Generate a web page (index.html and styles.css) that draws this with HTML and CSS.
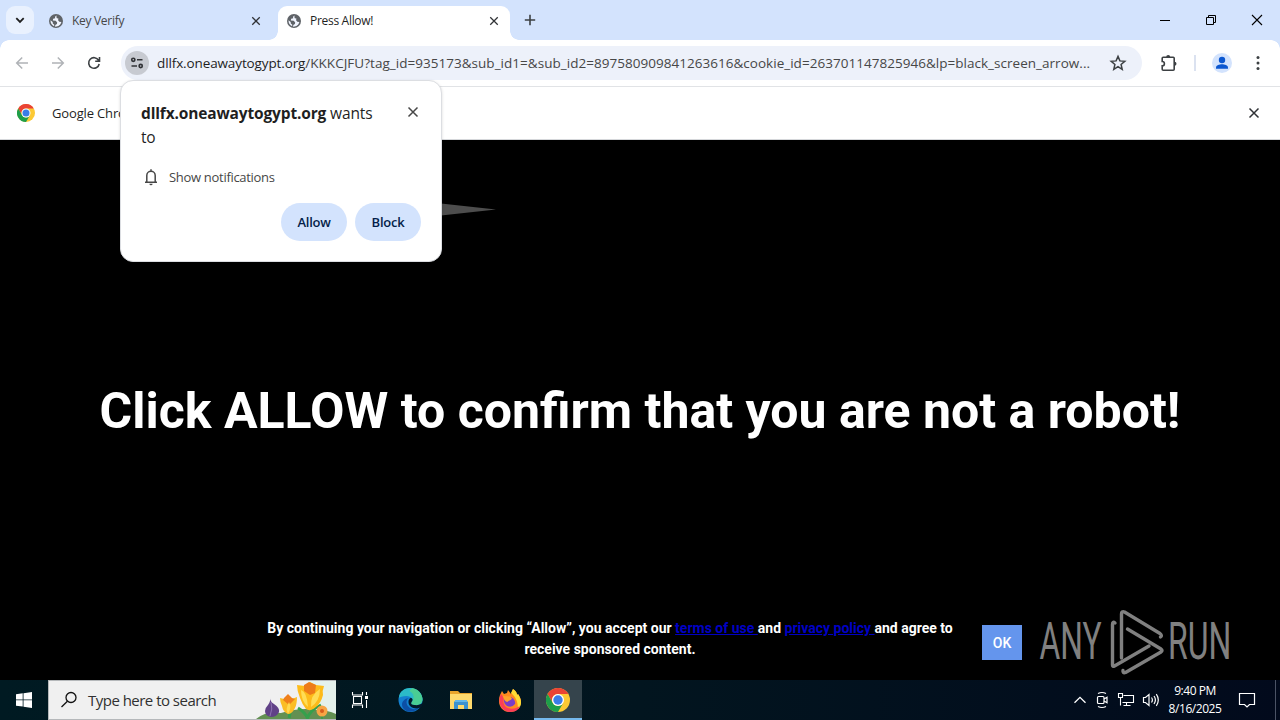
FILE: index.html
```html
<!DOCTYPE html>
<html lang="en">
<head>
  <meta charset="UTF-8" />
  <title>Press Allow!</title>
  <link rel="stylesheet" href="styles.css">
</head>
<body>

  <svg width="0" height="0" class="defs">
    <defs>
      <symbol id="globe" viewBox="0 0 16 16">
        <circle cx="8" cy="8" r="7" fill="#5f6368"/>
        <path d="M8.6 2.5 7 3.8l.2 1.4-2 .6-.4 1.7 2.9.2 1.500 1.700-.3 1.500-1.600 1-.2 1.800c3 .2 5.800-1.900 6.200-4.700l-2-.3-1.200-1.500.3-1.700-1.600-.3L8.400 4z" fill="#f1f5ff"/>
        <path d="M2.500 7.300c-.2 3 1.500 5 3.600 5.900l.2-1.500-1.500-1.200-.1-1.500z" fill="#f1f5ff"/>
      </symbol>
      <symbol id="close" viewBox="0 0 12 12">
        <path d="M1.5 1.5l9 9M10.5 1.5l-9 9" fill="none" stroke="currentColor" stroke-width="1.5"/>
      </symbol>
      <symbol id="chrome" viewBox="0 0 24 24">
        <circle cx="12" cy="12" r="12" fill="#fcc934"/>
        <path d="M1.6 6A12 12 0 0 1 22.4 6H12a6 6 0 0 0-5.2 9z" fill="#ea4335"/>
        <path d="M1.6 6A12 12 0 0 0 12 24l5.2-9A6 6 0 0 1 6.8 15z" fill="#1e9e4a"/>
        <circle cx="12" cy="12" r="6" fill="#fff"/>
        <circle cx="12" cy="12" r="4.7" fill="#3b7de8"/>
      </symbol>
    </defs>
  </svg>

  <div class="tabs">
    <div class="tab-search">
      <svg width="12" height="12" viewBox="0 0 12 12"><path d="M2.3 4.2L6 7.9l3.7-3.7" fill="none" stroke="#1f1f1f" stroke-width="1.8"/></svg>
    </div>
    <div class="tab">
      <svg class="favicon" width="16" height="16"><use href="#globe"/></svg>
      <span class="tab-title">Key Verify</span>
      <svg class="tab-close" width="10" height="10"><use href="#close"/></svg>
    </div>
    <div class="tab active">
      <svg class="favicon" width="16" height="16"><use href="#globe"/></svg>
      <span class="tab-title">Press Allow!</span>
      <svg class="tab-close" width="10" height="10"><use href="#close"/></svg>
    </div>
    <svg class="new-tab" width="12" height="12" viewBox="0 0 12 12"><path d="M6 .8v10.4M.8 6h10.4" stroke="#3c4043" stroke-width="1.6"/></svg>
    <div class="window-buttons">
      <svg width="12" height="12" viewBox="0 0 12 12"><path d="M1 6.5h10" stroke="#000"/></svg>
      <svg width="12" height="12" viewBox="0 0 12 12"><path d="M1.5 3.5h7v7h-7zM3.5 3.5v-2h7v7h-2" fill="none" stroke="#000"/></svg>
      <svg width="12" height="12" viewBox="0 0 12 12"><path d="M1 1l10 10M11 1L1 11" stroke="#000" stroke-width="1.1"/></svg>
    </div>
  </div>

  <div class="toolbar">
    <div class="nav">
      <svg width="16" height="16" viewBox="0 0 16 16"><path d="M14 8H3M8.2 2.500L2.700 8l5.500 5.500" fill="none" stroke="#b0b3b7" stroke-width="1.5"/></svg>
      <svg width="16" height="16" viewBox="0 0 16 16"><path d="M2 8h11M7.800 2.500L13.300 8l-5.500 5.500" fill="none" stroke="#b0b3b7" stroke-width="1.5"/></svg>
      <svg width="16" height="16" viewBox="0 0 16 16"><path d="M12.600 5.300A5.300 5.300 0 1 0 13.200 9M13.500 2v4.300H9.200" fill="none" stroke="#3c4043" stroke-width="1.6"/></svg>
    </div>
    <div class="omnibox">
      <div class="site-info">
        <svg width="16" height="16" viewBox="0 0 16 16"><g fill="none" stroke="#303236" stroke-width="1.6"><circle cx="4.300" cy="4.800" r="1.600"/><path d="M8 4.800h5.500M2.500 11h5.500"/><circle cx="11.700" cy="11" r="1.600"/></g></svg>
      </div>
      <div class="url"><span class="host">dllfx.oneawaytogypt.org</span>/KKKCJFU?tag_id=935173&amp;sub_id1=&amp;sub_id2=897580909841263616&amp;cookie_id=263701147825946&amp;lp=black_screen_arrow...</div>
      <svg class="star" width="18" height="18" viewBox="0 0 18 18"><path d="M9 2.400l1.900 4.500 4.900.4-3.700 3.200 1.100 4.800L9 12.700l-4.200 2.600 1.100-4.800-3.700-3.200 4.900-.4z" fill="none" stroke="#3c4043" stroke-width="1.5"/></svg>
    </div>
    <svg class="puzzle" width="18" height="18" viewBox="0 0 18 18"><path d="M2.200 4.200q0-1 1-1h10q1 0 1 1v11q0 1-1 1h-10q-1 0-1-1v-3.300a2.200 2.200 0 0 0 0-4.400z" fill="none" stroke="#3c4043" stroke-width="1.6"/><path d="M6.200 3a2 2 0 0 1 4 0zM14.500 7.700a2 2 0 0 1 0 4z" fill="#3c4043"/></svg>
    <div class="separator"></div>
    <svg class="avatar" width="20" height="20" viewBox="0 0 20 20"><circle cx="10" cy="10" r="10" fill="#d3e3fd"/><circle cx="10" cy="7" r="3.200" fill="#0b57d0"/><path d="M4 15.800v-1.300c0-2 3.500-3.200 6-3.200s6 1.200 6 3.200v1.300z" fill="#0b57d0"/></svg>
    <svg class="menu" width="4" height="16" viewBox="0 0 4 16"><g fill="#3c4043"><circle cx="2" cy="2.500" r="1.500"/><circle cx="2" cy="8" r="1.500"/><circle cx="2" cy="13.500" r="1.500"/></g></svg>
  </div>

  <div class="infobar">
    <svg width="18" height="18"><use href="#chrome"/></svg>
    <span class="infobar-text">Google Chrome</span>
    <svg class="infobar-close" width="12" height="12"><use href="#close"/></svg>
  </div>

  <div class="page">
    <svg class="arrow" width="60" height="14" viewBox="0 0 60 14"><path d="M0 .5L55 6.500 0 12.500z" fill="#4d4d4d"/></svg>
    <h1>Click ALLOW to confirm that you are not a robot!</h1>
    <div class="consent">
      <p>By continuing your navigation or clicking “Allow”, you accept our <a href="#">terms of use </a>and <a href="#">privacy policy </a>and agree to receive sponsored content.</p>
      <button class="ok">OK</button>
    </div>
    <svg class="watermark" width="200" height="70" viewBox="0 0 200 70">
      <g class="brand">
        <text transform="translate(4.500 54) scale(.62 1)" textLength="100" lengthAdjust="spacingAndGlyphs">ANY</text>
        <text transform="translate(133 54) scale(.62 1)" textLength="102" lengthAdjust="spacingAndGlyphs">RUN</text>
      </g>
      <g fill="none" stroke="#808080" stroke-width="3.400" stroke-linejoin="round" stroke-linecap="round">
        <path d="M86.500 53V9q0-3 3-2l35.500 21.500q2.500 2 .5 3.500"/>
        <path d="M80 18q-2.500-2-2.500 1.500V60q0 2 2 1L114 41"/>
        <path d="M92.500 24L126 44q2 1.500 0 3L90.500 67.500q-3 1-2.500-2" />
      </g>
    </svg>
  </div>

  <div class="popup">
    <div class="popup-head">
      <div class="popup-title"><b>dllfx.oneawaytogypt.org</b> wants to</div>
      <svg width="12" height="12"><use href="#close"/></svg>
    </div>
    <div class="permission">
      <svg width="16" height="18" viewBox="0 0 16 18"><path d="M2 14.300h12M3.800 14V7.500a4.200 4.200 0 0 1 8.400 0V14M8 3.500V1.300" fill="none" stroke="#474747" stroke-width="1.5"/><path d="M6.400 15.700h3.200a1.600 1.600 0 0 1-3.200 0z" fill="#474747"/></svg>
      <span>Show notifications</span>
    </div>
    <div class="popup-buttons">
      <button>Allow</button>
      <button>Block</button>
    </div>
  </div>

  <div class="taskbar">
    <div class="start">
      <svg width="16" height="16" viewBox="0 0 16 16"><path d="M0 2.200l6.700-.9v6.200H0zM7.500 1.200L16 0v7.500H7.500zM0 8.300h6.700v6.300L0 13.700zM7.500 8.300H16V16l-8.500-1.200z" fill="#fff"/></svg>
    </div>
    <div class="search">
      <svg width="18" height="18" viewBox="0 0 18 18"><g fill="none" stroke="#111" stroke-width="1.3"><circle cx="11" cy="6.500" r="5"/><path d="M7.400 10.200L1.500 16"/></g></svg>
      <span>Type here to search</span>
      <svg class="flowers" width="80" height="38" viewBox="0 0 80 38">
        <rect x="52" width="28" height="38" fill="#e4f1ec"/>
        <path d="M0 38q10-8 25-6 20-6 35-3 12 0 20 4v5z" fill="#629052"/>
        <path d="M33 37q2-6 0-11M52 38q-3-7-10-11M51 38q3-9 14-14" fill="none" stroke="#35a04c" stroke-width="3"/>
        <path d="M14 16q0 5 4 7 6 4 5 8-2 5-8 5-6-1-6-6 0-3 3-6 3-4 2-8z" fill="#604187"/>
        <path d="M15 21q2 7-1 14" stroke="#8d70b2" fill="none"/>
        <path d="M24 17l4 1 4-4 4 4 5-2q0 7-2 11-3 6-7 6-5-2-6-8-2-4-2-8z" fill="#fbbd24"/>
        <path d="M28 17l4-4 4 4 3 1-6 6-6-5z" fill="#ef7f1a"/>
        <path d="M33 21q3 5-1 12-3-5 1-12z" fill="#ffd94f"/>
        <path d="M41 4l8 1 5-4 6 3 8 1q-2 5-1 9-2 8-7 12-5 5-10 2-4-5-6-11-3-7-3-13z" fill="#fdbb1a"/>
        <path d="M48 4l5-3 7 3-1 8-5 2-6-4z" fill="#ed7b18"/>
        <path d="M45 9q6 2 7 17-7-6-7-17zM64 8q0 12-9 18-1-12 9-18z" fill="#ffdd55"/>
        <path d="M66 30v8" stroke="#3f9b4b" stroke-width="2"/>
        <circle cx="66" cy="30" r="5.500" fill="#f7a544"/><circle cx="66" cy="30" r="2" fill="#d65d1b"/>
      </svg>
    </div>
    <div class="app task-view">
      <svg width="18" height="18" viewBox="0 0 18 18"><g fill="none" stroke="#fff" stroke-width="1.1"><path d="M1.500 1v3h10V1M1.500 17v-3h10v3M2.500 5.500h8v7h-8zM15.500 1v3M15.500 9v8"/></g><path d="M14 5h3v3h-3z" fill="#fff"/></svg>
    </div>
    <div class="app edge">
      <svg width="25" height="24" viewBox="0 0 25 24">
        <circle cx="12.500" cy="12" r="12" fill="#1480d0"/>
        <path d="M1 10C1 3 7 0 12 0c7 0 12 5 12.500 11 0 5-4 7-8 6-3 0-4-1-3-3 2-2 0-6-5-6-4 0-7 1-7.500 2z" fill="#2bbbc8"/>
        <path d="M14 0c6 1 10 5 10.500 11 0 5-4 7-8 6-3 0-4-1-3-3 4-4 2-9-2-11z" fill="#55d383" opacity=".75"/>
        <path d="M9 12c-2 5 3 10 9 9l4-2c-5 6-14 6-17 1-3-5 1-10 7-10-2 0-3 1-3 2z" fill="#0c4fa5"/>
        <path d="M12.500 10c2 0 3 2 1 4-1 2 0 3 3 3 3 .5 6-.5 8.500-2l-1.500 4c-5 3-13 1-13-5 0-2 .5-3 2-4z" fill="#03182a"/>
      </svg>
    </div>
    <div class="app">
      <svg width="22" height="20" viewBox="0 0 22 20"><path d="M0 1h8l2 2h12v16H0z" fill="#e9a52c"/><path d="M0 4h22v15H0z" fill="#ffda6d"/><path d="M4 19v-7l2-2h10l2 2v7h-4v-4H8v4z" fill="#3d92cf"/><path d="M5 10h12v2H5z" fill="#63b8ea"/></svg>
    </div>
    <div class="app">
      <svg width="24" height="24" viewBox="0 0 24 24">
        <path d="M2.500 6l1.500-3 2 3 3-1 1-3 3 4 2-5c3 2 4 4 4 6l1-1c2 3 3 5 3 7 0 6-4 11-11 11S1 19 1 13c0-3 .5-5 1.500-7z" fill="#ff8a20"/>
        <path d="M13 5l2-4c3 2 4 4 4 6l1-1c4 6 4 12 0 15 0-8-3-13-7-16z" fill="#ffdc35"/>
        <path d="M1.500 10c-1 8 4 14 10.500 14 6 0 9-3 10-6-4 3-11 4-15 0-2-3-2-6-1-8l-3-4z" fill="#fb3d58"/>
        <path d="M6 10l7-1q5 3 4 7-3 4-8 2-4-3-3-8z" fill="#7b3cc8"/>
        <path d="M5 8l7 .5 2 2c-1 2-4 2-4.500 3.500-2 0-4-3-4.500-6z" fill="#ffa42b"/>
      </svg>
    </div>
    <div class="app running">
      <svg width="24" height="24"><use href="#chrome"/></svg>
    </div>
    <div class="tray">
      <svg width="14" height="14" viewBox="0 0 14 14"><path d="M1.500 9.800L7 4.300l5.500 5.500" fill="none" stroke="#fff" stroke-width="1.3"/></svg>
      <svg width="16" height="18" viewBox="0 0 16 18"><g fill="none" stroke="#fff" stroke-width="1.2"><rect x="3.500" y="5.500" width="6.500" height="7" rx="1"/><path d="M10 8l3-1.700v5.400L10 10M4 2.500q4-2 8 0M4 15.500q4 2 8 0"/></g></svg>
      <svg width="18" height="16" viewBox="0 0 18 16"><g fill="none" stroke="#fff" stroke-width="1.1"><path d="M6.500 3.500h10v7H5.500M3.500 5.500v8M9.500 10.500v3M6.500 13.500h7"/><path d="M1.500 1.500h4v4h-4z"/></g></svg>
      <svg width="18" height="16" viewBox="0 0 18 16"><g fill="none" stroke="#fff" stroke-width="1.2"><path d="M1.500 5.500h2L7 2.500v11l-3.500-3h-2zM9.500 5.500q1.800 2.500 0 5M12 4q2.800 4 0 8M14.300 2.200q4 5.800 0 11.600"/></g></svg>
    </div>
    <div class="clock"><span>9:40 PM</span><span>8/16/2025</span></div>
    <svg class="notice" width="18" height="18" viewBox="0 0 18 18"><path d="M1.500 2.500h15v11h-5L9 16l-2.500-2.500h-5z" fill="none" stroke="#fff" stroke-width="1.2"/></svg>
    <div class="show-desktop"></div>
  </div>

</body>
</html>
```
FILE: styles.css
```css
* {
  box-sizing: border-box;
}

body {
  margin: 0;
  width: 1280px;
  height: 720px;
  overflow: hidden;
  position: relative;
  display: flex;
  flex-direction: column;
  background: #000;
  font-family: "Open Sans", "Noto Sans", sans-serif;
  color: #1f1f1f;
}

svg {
  display: block;
  flex-shrink: 0;
}

button {
  border: none;
  padding: 0;
  font-family: inherit;
}

.defs {
  position: absolute;
}

/* tab strip */
.tabs {
  height: 40px;
  flex-shrink: 0;
  display: flex;
  padding: 6px 0 0 6px;
  background: #d3e3fd;
}

.tab-search {
  width: 28px;
  height: 28px;
  margin-right: 6px;
  display: flex;
  align-items: center;
  justify-content: center;
  border-radius: 9px;
  background: #e9f1fe;
}

.tab {
  width: 238px;
  height: 34px;
  display: flex;
  align-items: center;
  padding: 0 17px 5px 8px;
  font-size: 12px;
  color: #474747;
}

.tab.active {
  width: 232px;
  padding-right: 11px;
  position: relative;
  background: #fff;
  border-radius: 9px 9px 0 0;
  color: #1f1f1f;
}

.tab.active::before,
.tab.active::after {
  content: "";
  position: absolute;
  bottom: 0;
  width: 9px;
  height: 9px;
}

.tab.active::before {
  left: -9px;
  background: radial-gradient(circle at 0 0, transparent 8.5px, #fff 9px);
}

.tab.active::after {
  right: -9px;
  background: radial-gradient(circle at 100% 0, transparent 8.5px, #fff 9px);
}

.tab-title {
  flex: 1;
  margin-left: 8px;
  letter-spacing: -0.3px;
}

.new-tab {
  margin: 8px 0 0 14px;
}

.window-buttons {
  margin: 8px 17px 0 auto;
  display: flex;
  gap: 34px;
}

/* toolbar */
.toolbar {
  height: 47px;
  flex-shrink: 0;
  display: flex;
  align-items: center;
  padding: 0 20px 1px 14px;
  border-bottom: 1px solid #e1e3e6;
  background: radial-gradient(circle at 9px 9px, #fff 8.5px, #d3e3fd 9px) 0 0 / 9px 9px no-repeat,
              radial-gradient(circle at 0 9px, #fff 8.5px, #d3e3fd 9px) 100% 0 / 9px 9px no-repeat,
              #fff;
}

.nav {
  display: flex;
  gap: 20px;
  margin-right: 19px;
}

.omnibox {
  width: 1021px;
  height: 34px;
  display: flex;
  align-items: center;
  border-radius: 17px;
  background: #edf1fa;
  padding: 0 15px 0 4px;
}

.site-info {
  width: 24px;
  height: 24px;
  display: flex;
  align-items: center;
  justify-content: center;
  border-radius: 50%;
  background: #c7cad1;
}

.url {
  margin-left: 8px;
  flex: 1;
  font-size: 13.5px;
  white-space: nowrap;
  letter-spacing: 0.03px;
  color: #474747;
}

.host {
  color: #1f1f1f;
  letter-spacing: -0.12px;
}

.puzzle {
  margin-left: 18px;
}

.separator {
  width: 2px;
  height: 16px;
  margin: 0 16px;
  background: #dbe2f0;
}

.menu {
  margin-left: 24px;
}

/* default browser bar */
.infobar {
  height: 53px;
  flex-shrink: 0;
  display: flex;
  align-items: center;
  padding: 0 20px 0 17px;
  background: #fff;
  border-bottom: 1px solid #d5d7da;
  font-size: 13px;
}

.infobar-text {
  margin-left: 17px;
  white-space: nowrap;
  letter-spacing: -0.15px;
}

.infobar-close {
  margin-left: auto;
}

.tab-close,
.infobar-close {
  color: #303236;
}

/* web page */
.page {
  height: 540px;
  flex-shrink: 0;
  position: relative;
  overflow: hidden;
  background: #000;
  color: #fff;
  font-family: Roboto, sans-serif;
}

.arrow {
  position: absolute;
  left: 441px;
  top: 63px;
}

.page h1 {
  margin: 236px 0 0;
  text-align: center;
  font-size: 50px;
  line-height: 70px;
  font-weight: bold;
  white-space: nowrap;
}

.consent {
  display: flex;
  align-items: center;
  justify-content: flex-end;
  margin: 172px 258px 0 0;
}

.consent p {
  width: 704px;
  margin: 0 20px 0 0;
  text-align: center;
  font-size: 14px;
  line-height: 21px;
  font-weight: bold;
}

.consent a {
  color: #0000c4;
}

.ok {
  width: 40px;
  height: 35px;
  margin-top: 7px;
  background: #6495ed;
  color: #fff;
  font-size: 14px;
  font-weight: 500;
}

.watermark {
  position: absolute;
  left: 1035px;
  top: 465px;
}

.brand {
  font-size: 52px;
  font-weight: 400;
  fill: #808080;
}

/* permission bubble */
.popup {
  position: absolute;
  left: 120px;
  top: 80px;
  width: 322px;
  height: 182px;
  padding: 20px 20px 20px;
  border: 1px solid #dcdee2;
  border-radius: 13px;
  background: #fff;
  box-shadow: 0 1px 3px rgba(0, 0, 0, 0.15);
}

.popup-head {
  display: flex;
  justify-content: space-between;
}

.popup-head svg {
  margin: 5px 2px 0 0;
  color: #474747;
}

.popup-title {
  width: 240px;
  font-size: 15.5px;
  line-height: 24px;
  letter-spacing: -0.15px;
}

.permission {
  display: flex;
  align-items: center;
  margin: 18px 0 16px 2px;
  height: 20px;
  font-size: 13px;
  color: #474747;
  letter-spacing: -0.3px;
}

.permission span {
  margin-left: 10px;
}

.popup-buttons {
  display: flex;
  justify-content: flex-end;
  gap: 8px;
}

.popup-buttons button {
  width: 66px;
  height: 38px;
  border-radius: 19px;
  background: #d3e3fd;
  color: #041e49;
  font-size: 13px;
  font-weight: 600;
  letter-spacing: -0.25px;
}

/* taskbar */
.taskbar {
  height: 40px;
  flex-shrink: 0;
  display: flex;
  align-items: center;
  background: linear-gradient(90deg, #001a22, #02151f 50%, #020a1c);
  color: #fff;
}

.start {
  width: 48px;
  display: flex;
  justify-content: center;
}

.search {
  width: 288px;
  height: 40px;
  display: flex;
  align-items: center;
  padding-left: 11px;
  background: #f0f0f0;
  border: 1px solid #b5b8ba;
  border-right: none;
  color: #303030;
  font-size: 15px;
}

.search span {
  margin-left: 10px;
  white-space: nowrap;
  letter-spacing: -0.52px;
}

.flowers {
  margin-left: auto;
}

.app {
  width: 49px;
  height: 40px;
  display: flex;
  align-items: center;
  justify-content: center;
}

.task-view {
  width: 48px;
}

.edge {
  width: 52px;
}

.running {
  width: 48px;
  background: #35444c;
  border-bottom: 2px solid #76b9ed;
  padding-top: 2px;
}

.tray {
  margin-left: auto;
  display: flex;
  align-items: center;
  gap: 7px;
}

.clock {
  width: 64px;
  margin-left: 3px;
  display: flex;
  flex-direction: column;
  align-items: center;
  font-size: 12px;
  line-height: 18px;
  letter-spacing: -0.45px;
}

.notice {
  margin-left: 11px;
}

.show-desktop {
  width: 5px;
  height: 40px;
  margin-left: 19px;
  border-left: 1px solid #4b5365;
}
```
